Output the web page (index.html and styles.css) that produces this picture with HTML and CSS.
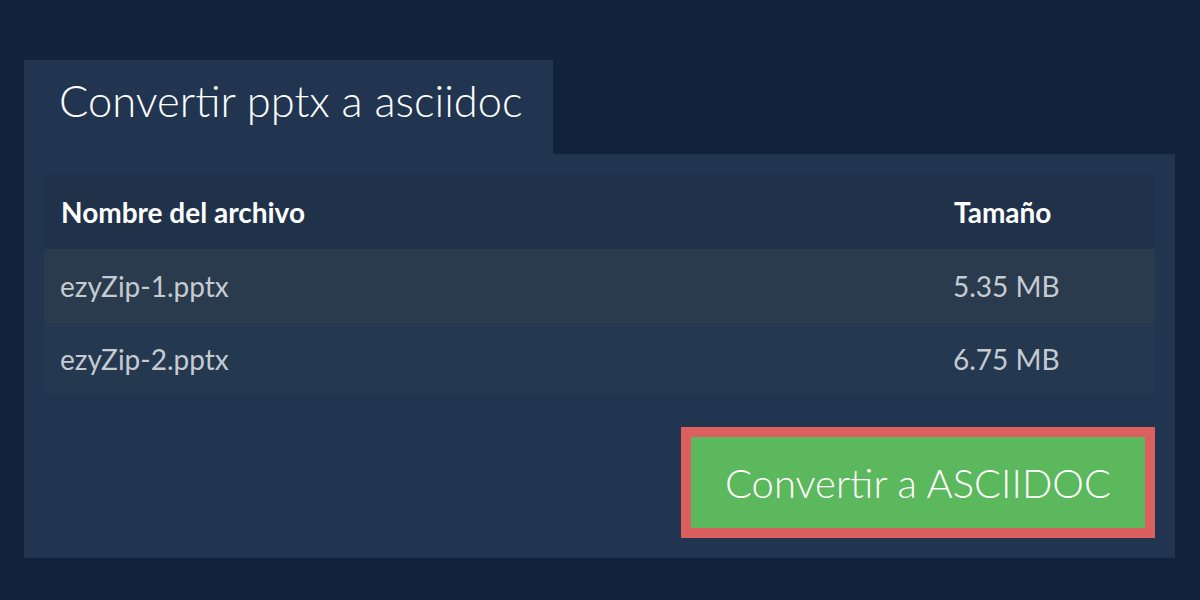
FILE: index.html
```html
<!DOCTYPE html>
<html lang="es">
<head>
<meta charset="utf-8">
<link rel="stylesheet" href="styles.css">
</head>
<body>
<div class="wrap">
  <div class="tab"><h1 class="title">Convertir pptx a asciidoc</h1></div>
  <div class="panel">
    <div class="table">
      <div class="row head"><div class="name">Nombre del archivo</div><div class="size">Tamaño</div></div>
      <div class="row odd"><div class="name">ezyZip-1.pptx</div><div class="size">5.35 MB</div></div>
      <div class="row even"><div class="name">ezyZip-2.pptx</div><div class="size">6.75 MB</div></div>
    </div>
    <div class="actions"><button class="btn">Convertir a ASCIIDOC</button></div>
  </div>
</div>
</body>
</html>
```
FILE: styles.css
```css
html, body { margin: 0; padding: 0; }
body {
  background: #10233a;
  font-family: Lato, "Open Sans", sans-serif;
  width: 1200px;
  height: 600px;
  overflow: hidden;
}
.wrap { padding: 60px 25px 0 24px; }
.tab {
  width: 529px;
  height: 94px;
  background: #213550;
  display: flex;
  align-items: center;
}
.title {
  margin: 0 0 0 35px;
  font-weight: 300;
  font-size: 43.5px;
  color: #ffffff;
  line-height: 1;
  position: relative;
  top: -6px;
}
.panel {
  background: #213550;
  padding: 20px 20px 20px 20px;
}
.table { display: flex; flex-direction: column; }
.row {
  display: flex;
  align-items: center;
  height: 74px;
  font-size: 28px;
  color: #c5cbd2;
  padding-left: 16px;
}
.row.head { background: #1f3249; color: #ffffff; font-weight: 700; height: 75px; padding-left: 17px; }
.row.odd { background: #2a3b4d; }
.row.even { background: #243850; height: 71px; }
.name { width: 893px; }
.size { flex: 1; }
.actions {
  display: flex;
  justify-content: flex-end;
  margin-top: 33px;
}
.btn {
  width: 474px;
  height: 111px;
  background: #5cb85c;
  border: 10px solid #db5f5e;
  color: #ffffff;
  font-family: Lato, "Open Sans", sans-serif;
  font-weight: 300;
  font-size: 40px;
  padding: 0;
  cursor: pointer;
}
```
